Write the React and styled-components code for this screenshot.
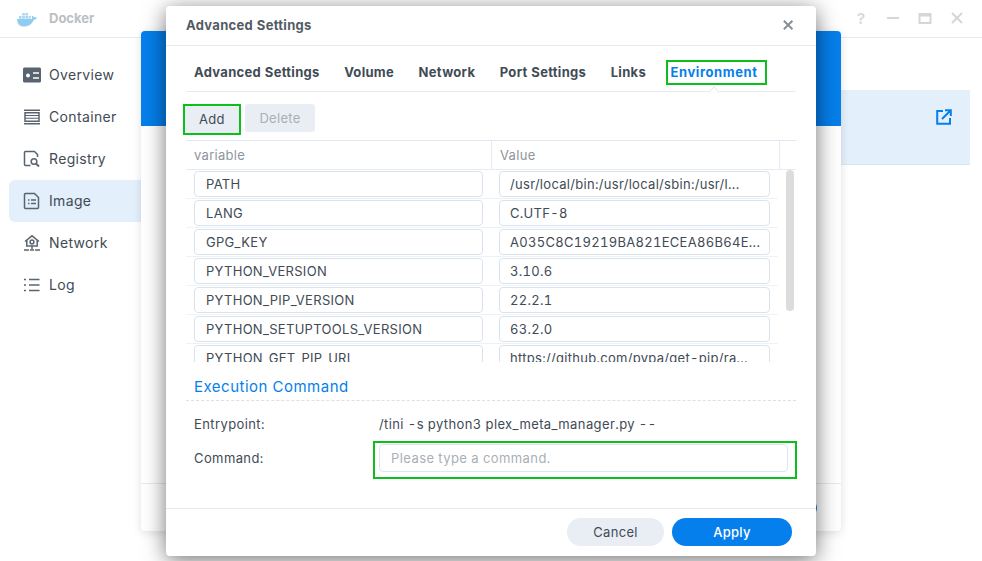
import React from 'react';
import styled, { createGlobalStyle } from 'styled-components';

const Global = createGlobalStyle`
  html, body { margin: 0; padding: 0; background: #fff; }
  body { width: 982px; height: 561px; overflow: hidden; font-family: Inter, "Noto Sans", sans-serif; color: #414b55; font-variant-numeric: tabular-nums; }
  * { box-sizing: border-box; }
`;
const Desktop = styled.div`position: relative; width: 982px; height: 561px; overflow: hidden; background: #fff;`;
const AppWindow = styled.div`position: absolute; inset: 0; display: flex; flex-direction: column;`;
const TitleBar = styled.div`
  height: 38px; flex: none; border-bottom: 1px solid #e6ebf1; display: flex; align-items: center; padding: 0 18px 1px 16px; gap: 8px;
  > svg:first-child { margin-top: 2px; }
`;
const AppName = styled.div`font-size: 13px; font-weight: 700; color: #bcc0c4; flex: 1; margin-left: 3px;`;
const WinControls = styled.div`display: flex; align-items: center; gap: 18px;`;
const AppBody = styled.div`display: flex; flex: 1; min-height: 0;`;
const Sidebar = styled.nav`width: 141px; padding: 16px 0 0 9px; display: flex; flex-direction: column; flex: none;`;
const NavItem = styled.div`
  height: 42px; display: flex; align-items: center; gap: 8px; padding: 0 0 1px 14px; font-size: 14px; color: #414b55; letter-spacing: .35px;
  border-radius: 6px 0 0 6px; background: ${p => (p.$active ? '#e3effb' : 'transparent')};
  svg { flex: none; }
`;
const BackContent = styled.div`flex: 1; padding: 52px 12px 0 0; display:flex; justify-content: flex-end;`;
const SelectedRow = styled.div`
  width: 129px; height: 75px; background: #e3effb; border-bottom: 1px solid #d8e5f3; padding: 19px 18px 0 0; display: flex; justify-content: flex-end;
`;
const MiddleDialog = styled.div`
  position: absolute; left: 141px; top: 31px; width: 700px; height: 500px; background: #fff; border-radius: 4px;
  box-shadow: 0 2px 10px rgba(0,0,0,.12); display: flex; flex-direction: column; overflow: hidden;
`;
const MiddleHead = styled.div`height: 95px; flex: none; background: #057feb;`;
const MiddleSpacer = styled.div`flex: 1;`;
const MiddleFoot = styled.div`height: 48px; flex: none; border-top: 1px solid #e6ebf1; display: flex; justify-content: flex-end; padding: 16px 24px 0 0;`;
const MiddleBtn = styled.div`width: 100px; height: 16px; background: #057feb; border-radius: 14px;`;
const Dialog = styled.div`
  position: absolute; left: 166px; top: 6px; width: 650px; height: 550px; background: #fff; border-radius: 4px;
  box-shadow: 0 4px 22px rgba(0,0,0,.55); display: flex; flex-direction: column; overflow: hidden;
`;
const DialogHead = styled.header`
  height: 40px; flex: none; border-bottom: 1px solid #e6ebf1; display: flex; align-items: center; justify-content: space-between;
  padding: 0 21px 1px 20px; font-size: 13px; font-weight: 700; color: #525b64; letter-spacing: .3px;
`;
const DialogBody = styled.div`flex: 1; min-height: 0; padding: 0 20px; display: flex; flex-direction: column;`;
const Tabs = styled.div`
  height: 46px; flex: none; border-bottom: 1px solid #e6ebf1; display: flex; align-items: flex-end; padding: 0 0 11px 8px; gap: 24.500px; position: relative;
`;
const Tab = styled.div`font-size: 13px; font-weight: 700; line-height: 16px; letter-spacing: ${p => (p.$active ? '.6px' : '.3px')}; color: ${p => (p.$active ? '#057feb' : '#414b55')};`;
const TabHighlight = styled.div`
  position: absolute; left: 480px; top: 14px; width: 101px; height: 25px; border: 2px solid #0cbf1c; pointer-events: none;
`;
const TabCaret = styled.div`
  position: absolute; left: 524px; bottom: -5px; width: 8px; height: 8px; background: #fff; border-left: 1px solid #e6ebf1; border-top: 1px solid #e6ebf1; transform: rotate(45deg);
`;
const Toolbar = styled.div`height: 48px; flex: none; display: flex; gap: 4px; padding-top: 12px; align-items: flex-start; margin-left: -3px;`;
const ToolButton = styled.div`
  height: ${p => (p.$outlined ? '31px' : '28px')}; width: ${p => (p.$outlined ? '58px' : '70px')};
  background: #e9edf4; border-radius: 3px; display: flex; align-items: center; justify-content: center; font-size: 13px; letter-spacing: .3px;
  color: ${p => (p.$disabled ? '#a9afb6' : '#414b55')};
  ${p => (p.$outlined ? 'border: 2px solid #0cbf1c; border-radius: 0; padding-bottom: 2px;' : '')}
`;
const TableWrap = styled.div`height: 222px; flex: none; overflow: hidden; position: relative; border-top: 1px solid #dfe7f0;`;
const HeadRow = styled.div`
  height: 29px; display: grid; grid-template-columns: 306px 288px 1fr; border-bottom: 1px solid #e6ebf1; font-size: 13px; color: #8e959c; letter-spacing: .3px;
`;
const HeadCell = styled.div`display: flex; align-items: center; padding-left: ${p => p.$pad}px; border-right: 1px solid #e6ebf1; &:last-child { border-right: 0; }`;
const Row = styled.div`height: 29px; display: grid; align-items: center; border-bottom: 1px solid #eef1f5; padding-left: 8px; width: 592px; grid-template-columns: 289px 271px; column-gap: 16px;`;
const Field = styled.div`
  height: 26px; border: 1px solid #d9e3ee; border-radius: 4px; font-size: 13px; letter-spacing: .3px; display: flex; align-items: center; padding: 0 ${p => (p.$value ? '10px' : '11px')}; color: #414b55; white-space: nowrap; overflow: hidden;
`;
const ScrollThumb = styled.div`position: absolute; right: 2px; top: 29px; width: 8px; height: 141px; background: #dcdcdc; border-radius: 4px;`;
const SectionTitle = styled.h3`margin: 0; height: 39px; flex: none; border-bottom: 1px dashed #dcdfe4; font-size: 15px; font-weight: 400; letter-spacing: .5px; color: #057feb; padding: 16px 0 0 8px; line-height: 18px;`;
const InfoGrid = styled.div`display: grid; grid-template-columns: 185px 1fr; padding: 12px 0 0 8px; font-size: 13px; letter-spacing: .4px;`;
const InfoLabel = styled.div`height: ${p => p.$h}px; display: flex; align-items: center;`;
const InfoValue = styled.div`height: ${p => p.$h}px; display: flex; align-items: center; letter-spacing: .4px;`;
const CommandBox = styled.div`
  width: 424px; height: 38px; margin: 4px 0 0 -6px; padding: 1px 7px 0 4px; border: 2px solid #0cbf1c;
`;
const CommandInput = styled.div`
  height: 28px; width: 100%; border: 1px solid #dfe6ee; border-radius: 4px; padding: 0 11px; display: flex; align-items: center; color: #a9afb6; font-size: 13px; letter-spacing: .42px;
`;
const Foot = styled.footer`
  height: 48px; flex: none; border-top: 1px solid #e6ebf1; display: flex; justify-content: flex-end; gap: 8px; padding: 9px 24px 0 0;
`;
const PillButton = styled.div`
  height: 28px; width: ${p => p.$w}px; border-radius: 14px; display: flex; align-items: center; justify-content: center; font-size: 13px; letter-spacing: .3px;
  background: ${p => (p.$primary ? '#057feb' : '#e9edf4')}; color: ${p => (p.$primary ? '#fff' : '#414b55')}; font-weight: ${p => (p.$primary ? 500 : 400)};
`;

const Whale = () => (
  <svg width="22" height="16" viewBox="0 0 22 16">
    <path d="M1 8h15c.3-1.300 0-2.600-.6-3.500 1.200.2 2.100.8 2.500 1.800 1-.3 2.200-.2 3.100.5-.6 1.300-1.800 2-3.200 1.900C16.400 12.800 12.500 15.500 8 15.500 3.500 15.500 1.300 12.500 1 8z" fill="#8fcdf0" />
    <path d="M3 5h2.600v2.700H3zM6.200 5h2.600v2.700H6.200zM9.400 5H12v2.700H9.400zM6.200 1.900h2.600v2.600H6.200zM9.400 1.900H12v2.600H9.400zM12.600 5h2.200v2.700h-2.200z" fill="#a6d8f3" />
    <path d="M1 11.500c1.500 3 4.500 4.300 7.500 4.300" stroke="#dfe3e6" fill="none" />
  </svg>
);
const IconBase = ({ children }) => (
  <svg width="18" height="18" viewBox="0 0 18 18" fill="none" stroke="#5a6470" strokeWidth="1.500">{children}</svg>
);
const OverviewIcon = () => (
  <IconBase>
    <rect x="0" y="1.500" width="18" height="15" rx="1.500" fill="#5a6470" stroke="none" />
    <circle cx="5" cy="9.500" r="2" fill="#fff" stroke="none" />
    <path d="M10 7h6M10 12h6" stroke="#fff" strokeWidth="1.300" />
  </IconBase>
);
const ContainerIcon = () => (
  <IconBase>
    <path d="M1 2.250h16M1 15.750h16" />
    <rect x="2" y="4.750" width="14" height="8.500" />
    <path d="M2 7.500h14M2 10.250h14" strokeWidth="1.200" />
  </IconBase>
);
const RegistryIcon = () => (
  <IconBase>
    <path d="M7.500 15.500H2.500a1 1 0 0 1-1-1v-12a1 1 0 0 1 1-1h9l3 3V7" />
    <circle cx="11" cy="11.500" r="2.800" />
    <path d="M13 13.500l3 3" strokeWidth="1.800" />
  </IconBase>
);
const ImageIcon = () => (
  <IconBase>
    <path d="M2.500 1.500h9l4 4v10a1 1 0 0 1-1 1h-12a1 1 0 0 1-1-1v-13a1 1 0 0 1 1-1z" />
    <path d="M5 8h1.500M8 8h5M5 11.500h1.500M8 11.500h5" />
  </IconBase>
);
const NetworkIcon = () => (
  <IconBase>
    <path d="M2 7.500L9 1.800l7 5.700M3.800 6.500V12h10.400V6.500" />
    <circle cx="9" cy="8" r="1.900" />
    <path d="M9 12v3M1 16h5M12 16h5M7 16h4" />
  </IconBase>
);
const LogIcon = () => (
  <IconBase>
    <path d="M1 3.500h2M1 9h2M1 14.500h2M6 3.500h10.500M6 9h10.500M6 14.500h10.500" />
  </IconBase>
);
const ExternalIcon = () => (
  <svg width="16" height="16" viewBox="0 0 16 16" fill="none" stroke="#057feb" strokeWidth="2">
    <path d="M7 2H1.200v12.800H14V9" />
    <path d="M6 10l8-8M9 1.200h5.800V7" />
  </svg>
);
const Glyph = ({ d, w = 14, c = '#d4d6d9', sw = 2 }) => (
  <svg width={w} height="14" viewBox="0 0 14 14" fill="none" stroke={c} strokeWidth={sw}><path d={d} /></svg>
);
const HelpMark = styled.span`font-size: 15px; font-weight: 700; color: #d8dadd; width: 14px; text-align: center;`;

const navItems = [
  ['Overview', OverviewIcon], ['Container', ContainerIcon], ['Registry', RegistryIcon],
  ['Image', ImageIcon, true], ['Network', NetworkIcon], ['Log', LogIcon],
];
const tabs = ['Advanced Settings', 'Volume', 'Network', 'Port Settings', 'Links'];
const rows = [
  ['PATH', '/usr/local/bin:/usr/local/sbin:/usr/l...'],
  ['LANG', 'C.UTF-8'],
  ['GPG_KEY', 'A035C8C19219BA821ECEA86B64E...'],
  ['PYTHON_VERSION', '3.10.6'],
  ['PYTHON_PIP_VERSION', '22.2.1'],
  ['PYTHON_SETUPTOOLS_VERSION', '63.2.0'],
  ['PYTHON_GET_PIP_URL', 'https://github.com/pypa/get-pip/ra...'],
];

export default function App() {
  return (
    <Desktop>
      <Global />
      <AppWindow>
        <TitleBar>
          <Whale />
          <AppName>Docker</AppName>
          <WinControls>
            <HelpMark>?</HelpMark>
            <Glyph d="M1 7h12" />
            <Glyph d="M1.500 3h11v9h-11zM1.500 4.500h11" />
            <Glyph d="M2 2l10 10M12 2L2 12" />
          </WinControls>
        </TitleBar>
        <AppBody>
          <Sidebar>
            {navItems.map(([label, Icon, active]) => (
              <NavItem key={label} $active={active}><Icon />{label}</NavItem>
            ))}
          </Sidebar>
          <BackContent>
            <SelectedRow><ExternalIcon /></SelectedRow>
          </BackContent>
        </AppBody>
      </AppWindow>
      <MiddleDialog>
        <MiddleHead />
        <MiddleSpacer />
        <MiddleFoot><MiddleBtn /></MiddleFoot>
      </MiddleDialog>
      <Dialog>
        <DialogHead>
          Advanced Settings
          <Glyph w={12} c="#868d94" sw={2.200} d="M1 2l10 10M11 2L1 12" />
        </DialogHead>
        <DialogBody>
          <Tabs>
            {tabs.map(t => <Tab key={t}>{t}</Tab>)}
            <Tab $active>Environment</Tab>
            <TabHighlight />
            <TabCaret />
          </Tabs>
          <Toolbar>
            <ToolButton $outlined>Add</ToolButton>
            <ToolButton $disabled>Delete</ToolButton>
          </Toolbar>
          <TableWrap>
            <HeadRow>
              <HeadCell $pad={8}>variable</HeadCell>
              <HeadCell $pad={8}>Value</HeadCell>
              <HeadCell />
            </HeadRow>
            {rows.map(([k, v]) => (
              <Row key={k}>
                <Field>{k}</Field>
                <Field $value>{v}</Field>
              </Row>
            ))}
            <ScrollThumb />
          </TableWrap>
          <SectionTitle>Execution Command</SectionTitle>
          <InfoGrid>
            <InfoLabel $h={22}>Entrypoint:</InfoLabel>
            <InfoValue $h={22}>/tini -s python3 plex_meta_manager.py --</InfoValue>
            <InfoLabel $h={46}>Command:</InfoLabel>
            <InfoValue $h={46}>
              <CommandBox><CommandInput>Please type a command.</CommandInput></CommandBox>
            </InfoValue>
          </InfoGrid>
        </DialogBody>
        <Foot>
          <PillButton $w={97}>Cancel</PillButton>
          <PillButton $w={120} $primary>Apply</PillButton>
        </Foot>
      </Dialog>
    </Desktop>
  );
}
